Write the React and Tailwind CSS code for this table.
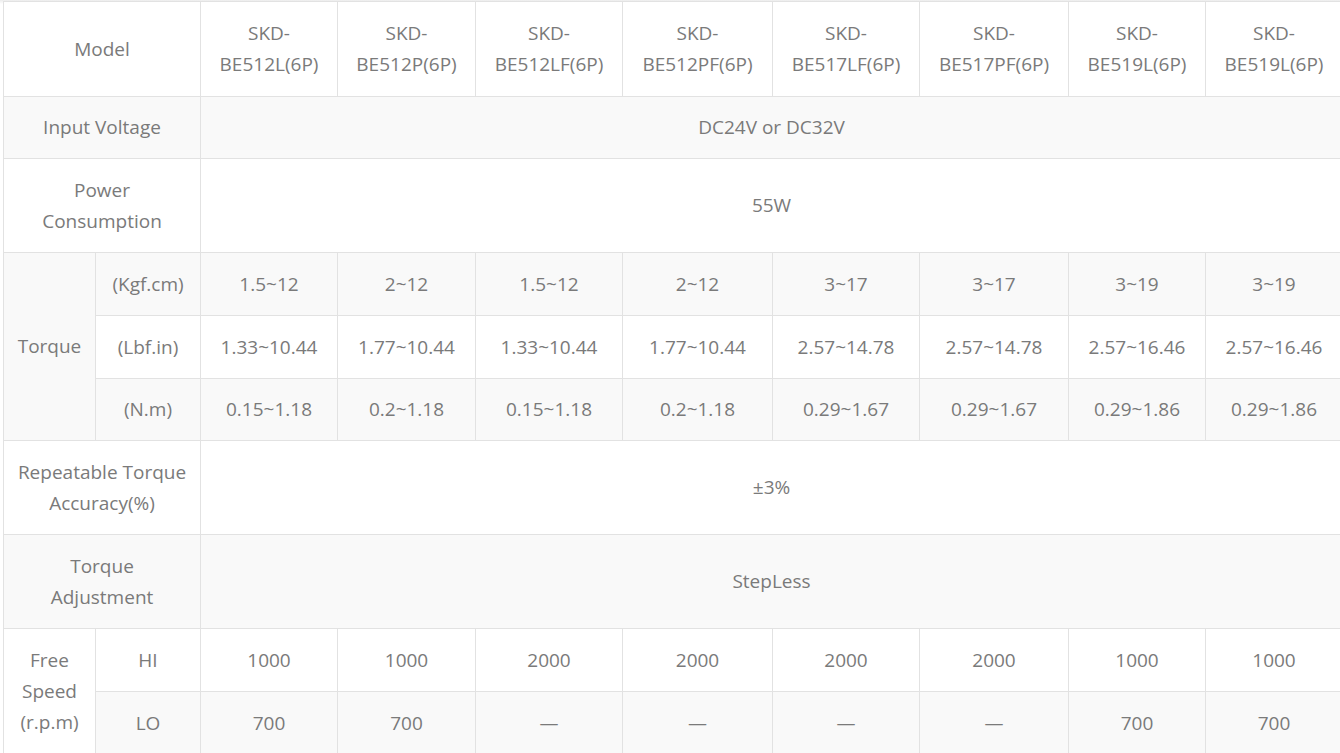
import React from 'react';

const models = [
  'BE512L(6P)', 'BE512P(6P)', 'BE512LF(6P)', 'BE512PF(6P)',
  'BE517LF(6P)', 'BE517PF(6P)', 'BE519L(6P)', 'BE519L(6P)',
];

const torque = [
  { unit: '(Kgf.cm)', vals: ['1.5~12', '2~12', '1.5~12', '2~12', '3~17', '3~17', '3~19', '3~19'], bg: 'bg-[#f9f9f9]', h: 'h-[63px]' },
  { unit: '(Lbf.in)', vals: ['1.33~10.44', '1.77~10.44', '1.33~10.44', '1.77~10.44', '2.57~14.78', '2.57~14.78', '2.57~16.46', '2.57~16.46'], bg: 'bg-white', h: 'h-[63px]' },
  { unit: '(N.m)', vals: ['0.15~1.18', '0.2~1.18', '0.15~1.18', '0.2~1.18', '0.29~1.67', '0.29~1.67', '0.29~1.86', '0.29~1.86'], bg: 'bg-[#f9f9f9]', h: 'h-[62px]' },
];

const speed = [
  { unit: 'HI', vals: ['1000', '1000', '2000', '2000', '2000', '2000', '1000', '1000'], bg: 'bg-white', h: 'h-[63px]' },
  { unit: 'LO', vals: ['700', '700', '—', '—', '—', '—', '700', '700'], bg: 'bg-[#f9f9f9]', h: 'h-[63px]' },
];

const cell = 'border border-[#e2e2e2] text-center align-middle font-normal px-0 whitespace-nowrap';

export default function App() {
  return (
    <div className="w-[1340px] h-[753px] overflow-hidden bg-white">
      <div className="h-[4px] bg-gradient-to-b from-[#ececec] to-white" />
      <table
        className="table-fixed border-collapse w-[1339px] ml-[3px] -mt-[3px] text-[19px] leading-[31px] text-[#7a7a7a]"
        style={{ fontFamily: '"Open Sans", "Noto Sans", sans-serif' }}
      >
        <colgroup>
          <col className="w-[92px]" />
          <col className="w-[105px]" />
          <col className="w-[137px]" />
          <col className="w-[138px]" />
          <col className="w-[147px]" />
          <col className="w-[150px]" />
          <col className="w-[147px]" />
          <col className="w-[149px]" />
          <col className="w-[137px]" />
          <col className="w-[137px]" />
        </colgroup>
        <tbody>
          {/* Model header */}
          <tr className="h-[95px] bg-white">
            <td colSpan={2} className={cell}>Model</td>
            {models.map((m, i) => (
              <td key={i} className={cell}>SKD-<br />{m}</td>
            ))}
          </tr>

          <tr className="h-[62px] bg-[#f9f9f9]">
            <td colSpan={2} className={cell}>Input Voltage</td>
            <td colSpan={8} className={cell}>DC24V or DC32V</td>
          </tr>

          <tr className="h-[94px] bg-white">
            <td colSpan={2} className={cell}>Power<br />Consumption</td>
            <td colSpan={8} className={cell}>55W</td>
          </tr>

          {/* Torque block */}
          {torque.map((row, r) => (
            <tr key={row.unit} className={`${row.h} ${row.bg}`}>
              {r === 0 && (
                <td rowSpan={3} className={`${cell} bg-[#f9f9f9]`}>Torque</td>
              )}
              <td className={cell}>{row.unit}</td>
              {row.vals.map((v, i) => (
                <td key={i} className={cell}>{v}</td>
              ))}
            </tr>
          ))}

          <tr className="h-[94px] bg-white">
            <td colSpan={2} className={cell}>Repeatable Torque<br />Accuracy(%)</td>
            <td colSpan={8} className={cell}>±3%</td>
          </tr>

          <tr className="h-[94px] bg-[#f9f9f9]">
            <td colSpan={2} className={cell}>Torque<br />Adjustment</td>
            <td colSpan={8} className={cell}>StepLess</td>
          </tr>

          {/* Free speed block */}
          {speed.map((row, r) => (
            <tr key={row.unit} className={`${row.h} ${row.bg}`}>
              {r === 0 && (
                <td rowSpan={2} className={`${cell} bg-white`}>Free<br />Speed<br />(r.p.m)</td>
              )}
              <td className={cell}>{row.unit}</td>
              {row.vals.map((v, i) => (
                <td key={i} className={cell}>{v}</td>
              ))}
            </tr>
          ))}
        </tbody>
      </table>
    </div>
  );
}
